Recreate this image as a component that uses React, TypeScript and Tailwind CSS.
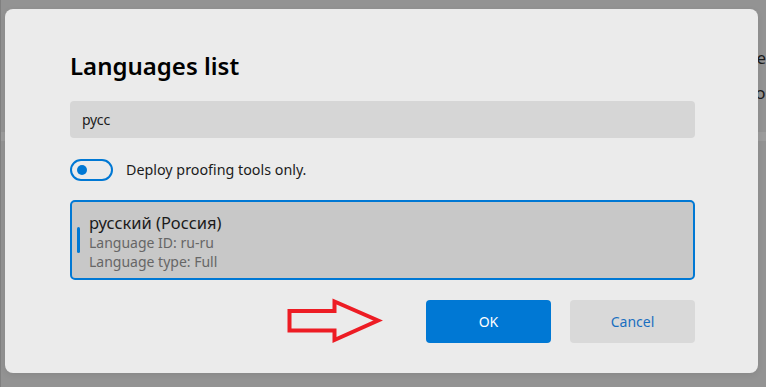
import React from 'react';

const font = "font-['Noto_Sans','Open_Sans',sans-serif]";

const Arrow = () => (
  <svg width="100" height="50" viewBox="0 0 100 50" className="shrink-0 -mt-[4px]">
    <polygon
      points="4.5,15 49.5,15 49.5,5.5 93,24.5 49.5,44 49.5,34.5 4.5,34.5"
      fill="none"
      stroke="#ed1c24"
      strokeWidth="4"
      strokeLinejoin="miter"
      strokeMiterlimit="10"
    />
  </svg>
);

const App = () => {
  return (
    <div className={`relative w-[766px] h-[387px] overflow-hidden bg-[#939393] ${font}`}>
      {/* Window behind the dialog */}
      <div className="flex h-full">
        <div className="w-[25px] h-full bg-[#8c8c8c] border-r border-[#808080]" />
        <div className="flex-1 flex flex-col">
          <div className="pt-[40px] text-[17px] leading-[35px] text-[#1c1c1c] whitespace-nowrap">
            <div className="pl-[722px]">Done</div>
            <div className="pl-[719px]">Radio</div>
          </div>
          <div className="mt-[22px] h-[9px] bg-[#9c9c9c]" />
        </div>
      </div>

      {/* Dialog */}
      <div className="absolute left-[5px] top-[9px] w-[753px] h-[364px] rounded-[8px] bg-[#ebebeb] pl-[65px] pt-[41px] shadow-[0_2px_6px_rgba(0,0,0,0.08)]">
        <div className="w-[625px] flex flex-col">
          <h1 className="text-[24px] leading-[32px] font-semibold text-black">Languages list</h1>

          <div className="mt-[19px] h-[37px] rounded-[4px] bg-[#d6d6d6] pl-[12px] flex items-center text-[14px] text-[#1b1b1b]">
            русс
          </div>

          <div className="mt-[21px] h-[22px] flex items-center gap-[13px]">
            <div className="w-[43px] h-[22px] rounded-full border-2 border-[#0078d4] flex items-center pl-[5px]">
              <div className="w-[10px] h-[10px] rounded-full bg-[#0078d4]" />
            </div>
            <span className="text-[14.3px] text-[#1b1b1b]">Deploy proofing tools only.</span>
          </div>

          <div className="mt-[19px] h-[80px] rounded-[5px] border-2 border-[#0078d4] bg-[#c8c8c8] flex items-center pl-[5px]">
            <div className="w-[3px] h-[26px] rounded-full bg-[#0078d4]" />
            <div className="self-start pt-[10px] pl-[9px]">
              <div className="text-[16.5px] leading-[21px] text-[#1b1b1b]">русский (Россия)</div>
              <div className="text-[14px] leading-[19px] text-[#666666]">Language ID: ru-ru</div>
              <div className="text-[14px] leading-[19px] text-[#666666]">Language type: Full</div>
            </div>
          </div>

          <div className="mt-[20px] h-[43px] flex items-start justify-end">
            <Arrow />
            <button className="ml-[41px] w-[125px] h-[43px] rounded-[4px] bg-[#0078d4] text-white text-[14px]">
              OK
            </button>
            <button className="ml-[19px] w-[125px] h-[43px] rounded-[4px] bg-[#d9d9d9] text-[#1a6fc0] text-[14px]">
              Cancel
            </button>
          </div>
        </div>
      </div>
    </div>
  );
};

export default App;
